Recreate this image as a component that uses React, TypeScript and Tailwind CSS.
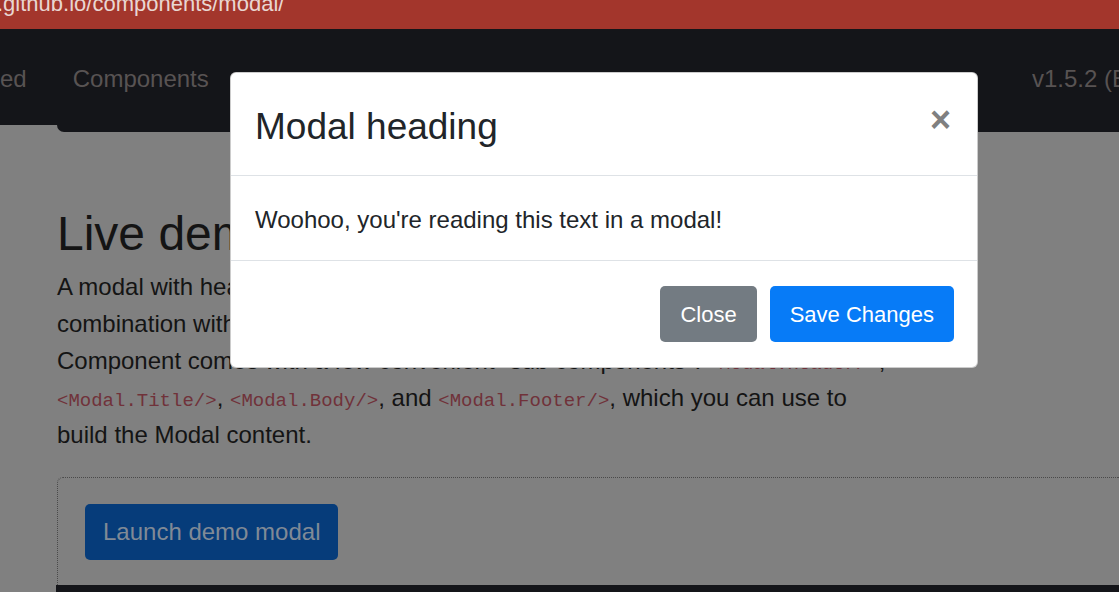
export default function App() {
  return (
    <div className="relative w-[1119px] h-[592px] overflow-hidden bg-[#808080] font-['Liberation_Sans',Arial,sans-serif]">
      {/* Address bar */}
      <div className="h-[29px] bg-[#a3362c] overflow-hidden">
        <div className="-mt-[7px] -ml-[3px] text-[22px] leading-none text-[#e9d6d2] whitespace-nowrap">
          .github.io/components/modal/
        </div>
      </div>

      {/* Navbar */}
      <div className="h-[96px] pt-[4px] bg-[#141519] flex items-center justify-between text-[24px] text-[#585353] whitespace-nowrap">
        <div className="flex items-center gap-[46px]">
          <span>ed</span>
          <span>Components</span>
        </div>
        <div className="w-[87px] shrink-0 overflow-hidden">v1.5.2 (Bootstrap 4.6)</div>
      </div>
      <div className="flex h-[7px]">
        <div className="w-[57px]" />
        <div className="flex-1 bg-[#141519] rounded-bl-[8px]" />
      </div>

      {/* Page content (dimmed) */}
      <div className="pl-[57px] pt-[73px] text-[#141414]">
        <h2 className="text-[48px] leading-[1.2]">Live demo</h2>
        <p className="mt-[5px] text-[24px] leading-[37px] whitespace-nowrap">
          <span className="block">A modal with header, body, and set of actions in the footer. Use <Code>&lt;Modal/&gt;</Code> in</span>
          <span className="block">combination with other components to show or hide your Modal. The <Code>&lt;Modal/&gt;</Code></span>
          <span className="block">Component comes with a few convenient "sub components": <Code>&lt;Modal.Header/&gt;</Code>,</span>
          <span className="block">
            <Code>&lt;Modal.Title/&gt;</Code>, <Code>&lt;Modal.Body/&gt;</Code>, and <Code>&lt;Modal.Footer/&gt;</Code>, which you can use to
          </span>
          <span className="block">build the Modal content.</span>
        </p>

        <div className="mt-[24px] border-t border-l border-dotted border-[#4a4a4a] rounded-tl-[6px] pt-[26px] pl-[27px] pb-[25px]">
          <button className="h-[56px] px-[18px] rounded-[5px] bg-[#063c7a] text-[24px] text-[#808a96]">
            Launch demo modal
          </button>
        </div>
        <div className="-ml-[1px] h-[20px] bg-[#141519]" />
      </div>

      {/* Modal */}
      <div className="absolute left-[230px] top-[72px] w-[748px] bg-white rounded-[6px] border border-black/20 text-[#212529]">
        <div className="flex items-start justify-between px-[24px] pt-[27px] pb-[21px] border-b border-[#dee2e6]">
          <h4 className="text-[37px] leading-[54px]">Modal heading</h4>
          <span className="mt-[2px] mr-[2px] text-[36px] leading-none font-bold text-[#808080]">×</span>
        </div>
        <div className="pt-[26px] pb-[22px] px-[24px] text-[24px] leading-[36px]">
          Woohoo, you're reading this text in a modal!
        </div>
        <div className="flex justify-end gap-[13px] border-t border-[#dee2e6] py-[25px] pr-[23px]">
          <button className="h-[56px] px-[20px] rounded-[5px] bg-[#737b82] text-[22px] text-white">Close</button>
          <button className="h-[56px] px-[20px] rounded-[5px] bg-[#077bf7] text-[22px] text-white">Save Changes</button>
        </div>
      </div>
    </div>
  );
}

function Code({ children }: { children: React.ReactNode }) {
  return (
    <code className="font-['Liberation_Mono',monospace] text-[19px] leading-none text-[#70323a]">{children}</code>
  );
}
